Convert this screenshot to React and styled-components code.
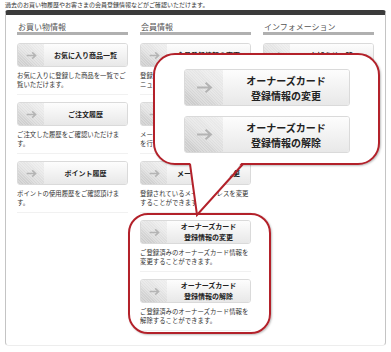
import React from "react";
import styled, { createGlobalStyle } from "styled-components";

const GlobalStyle = createGlobalStyle`
  body {
    margin: 0;
    background: #fff;
    font-family: "Noto Sans CJK JP", "Noto Sans", sans-serif;
  }
`;

const RED = "#b3212a";

const Page = styled.div`
  position: relative;
  width: 391px;
  height: 352px;
  overflow: hidden;
`;
const Lead = styled.div`
  height: 10px;
  padding-left: 5px;
  font-size: 6px;
  line-height: 9px;
  color: #333;
  white-space: nowrap;
`;
const Panel = styled.div`
  box-sizing: border-box;
  margin-left: 5px;
  width: 381px;
  height: 336px;
  padding: 0 11px;
  border-top: 5px solid #3b3b3b;
  border-left: 1px solid #c4c4c4;
  border-right: 1px solid #c4c4c4;
  border-bottom: 1px solid #ededed;
  border-radius: 3px 3px 4px 4px;
  display: grid;
  grid-template-columns: repeat(3, 111px);
  column-gap: 12px;
  align-items: start;
`;
const Column = styled.div`
  display: flex;
  flex-direction: column;
`;
const ColumnTitle = styled.div`
  margin-top: 6px;
  margin-bottom: 8px;
  padding-left: 1px;
  font-size: 8px;
  line-height: 11px;
  color: #555;
  border-bottom: 3px solid #b0b0b0;
`;
const Item = styled.div`
  padding-bottom: 5px;
  margin-bottom: 7px;
  border-bottom: 1px solid #f1f1f1;
`;
const Button = styled.div`
  box-sizing: border-box;
  display: flex;
  width: ${(p) => (p.$big ? "166px" : "100%")};
  height: ${(p) => (p.$big ? "37px" : "24px")};
  border: 1px solid #dadada;
  border-radius: 3px;
  overflow: hidden;
`;
const ArrowBox = styled.div`
  width: ${(p) => (p.$big ? "38px" : "26px")};
  flex-shrink: 0;
  display: flex;
  align-items: center;
  justify-content: center;
  background:
    repeating-linear-gradient(45deg, rgba(255, 255, 255, 0.25) 0 1px, transparent 1px 2px),
    linear-gradient(30deg, #c6c6c6 0%, #e2e2e2 55%, #efefef 100%);
`;
const Label = styled.div`
  flex: 1;
  display: flex;
  flex-direction: column;
  align-items: center;
  justify-content: center;
  font-size: ${(p) => (p.$big ? "10px" : "7px")};
  line-height: ${(p) => (p.$big ? "15px" : "11px")};
  font-weight: bold;
  color: #222;
  white-space: nowrap;
  background: linear-gradient(#fdfdfd, #e8e8e8);
`;
const Desc = styled.div`
  margin-top: 5px;
  font-size: 6.4px;
  line-height: 8.5px;
  color: #333;
  line-break: strict;
`;
const BigCallout = styled.div`
  position: absolute;
  left: 153px;
  top: 53px;
  box-sizing: border-box;
  width: 227px;
  height: 112px;
  padding: 14px 0 0 29px;
  border: 2px solid ${RED};
  border-radius: 22px;
  background: #fff;
  box-shadow: 1px 1px 2px rgba(0, 0, 0, 0.25);
  display: flex;
  flex-direction: column;
  gap: 10px;
`;
const Tail = styled.svg`
  position: absolute;
  left: 185px;
  top: 161px;
  overflow: visible;
`;
const Highlight = styled.div`
  position: absolute;
  left: 128px;
  top: 213px;
  box-sizing: border-box;
  width: 143px;
  height: 121px;
  border: 2px solid ${RED};
  border-radius: 20px;
  box-shadow: 1px 1px 2px rgba(0, 0, 0, 0.25);
  pointer-events: none;
`;

const Arrow = ({ big }) => (
  <svg width={big ? 17 : 11} height={big ? 13 : 9} viewBox="0 0 16 12">
    <path
      d="M1 6 H14 M9 1.5 L14 6 L9 10.5"
      fill="none"
      stroke="#b4b4b4"
      strokeWidth={big ? 2 : 2.2}
    />
  </svg>
);

const NavButton = ({ lines, big }) => (
  <Button $big={big}>
    <ArrowBox $big={big}>
      <Arrow big={big} />
    </ArrowBox>
    <Label $big={big}>
      {lines.map((l) => (
        <span key={l}>{l}</span>
      ))}
    </Label>
  </Button>
);

const columns = [
  {
    title: "お買い物情報",
    items: [
      { lines: ["お気に入り商品一覧"], desc: "お気に入りに登録した商品を一覧でご覧いただけます。" },
      { lines: ["ご注文履歴"], desc: "ご注文した履歴をご確認いただけます。" },
      { lines: ["ポイント履歴"], desc: "ポイントの使用履歴をご確認頂けます。" },
    ],
  },
  {
    title: "会員情報",
    items: [
      { lines: ["会員登録情報の変更"], desc: "登録されている会員情報を変更するメニューです。" },
      { lines: ["メールマガジン設定"], desc: "メールマガジンの登録や配信先の変更を行うことができます。" },
      { lines: ["メールアドレス変更"], desc: "登録されているメールアドレスを変更することができます。" },
      { lines: ["オーナーズカード", "登録情報の変更"], desc: "ご登録済みのオーナーズカード情報を変更することができます。" },
      { lines: ["オーナーズカード", "登録情報の解除"], desc: "ご登録済みのオーナーズカード情報を解除することができます。" },
    ],
  },
  {
    title: "インフォメーション",
    items: [
      { lines: ["お知らせ一覧"], desc: "ショップからのお知らせをご確認いただけます。" },
    ],
  },
];

const App = () => {
  return (
    <Page>
      <GlobalStyle />
      <Lead>過去のお買い物履歴やお客さまの会員登録情報などがご確認いただけます。</Lead>
      <Panel>
        {columns.map((col) => (
          <Column key={col.title}>
            <ColumnTitle>{col.title}</ColumnTitle>
            {col.items.map((it) => (
              <Item key={it.desc}>
                <NavButton lines={it.lines} />
                <Desc>{it.desc}</Desc>
              </Item>
            ))}
          </Column>
        ))}
      </Panel>

      <Highlight />
      <BigCallout>
        <NavButton big lines={["オーナーズカード", "登録情報の変更"]} />
        <NavButton big lines={["オーナーズカード", "登録情報の解除"]} />
      </BigCallout>
      <Tail width="60" height="56">
        <polygon points="5,0 58,0 12,54" fill="#fff" />
        <path d="M5 3 L12 54 L58 3" fill="none" stroke={RED} strokeWidth="2" strokeLinejoin="miter" />
      </Tail>
    </Page>
  );
};

export default App;
